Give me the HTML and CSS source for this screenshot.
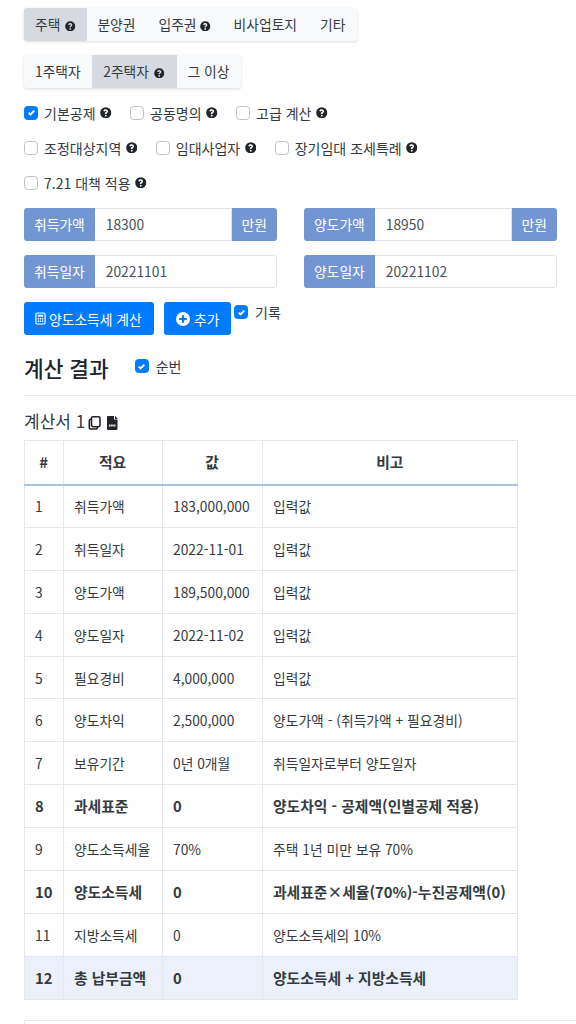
FILE: index.html
```html
<!DOCTYPE html>
<html lang="ko">
<head>
<meta charset="utf-8">
<title>양도소득세 계산</title>
<link rel="stylesheet" href="styles.css">
</head>
<body>
<svg class="defs" width="0" height="0" aria-hidden="true">
  <symbol id="q" viewBox="0 0 512 512"><path fill="currentColor" d="M256 8a248 248 0 1 0 0 496 248 248 0 0 0 0-496zm0 418a42 42 0 1 1 0-84 42 42 0 0 1 0 84zm40-134v6c0 7-5 12-12 12h-56c-7 0-12-5-12-12v-9c0-36 27-50 47-62 18-10 29-16 29-29 0-17-22-29-39-29-23 0-33 11-48 30-4 5-11 6-16 2l-35-26c-5-4-6-11-3-16 24-36 55-56 102-56 50 0 104 39 104 90 0 68-61 69-61 93z"/></symbol>
</svg>
<div class="tabs tabs-first">
  <span class="tab active narrow">주택<svg class="q"><use href="#q"/></svg></span><span class="tab tight-left">분양권</span><span class="tab tight-q">입주권<svg class="q"><use href="#q"/></svg></span><span class="tab">비사업토지</span><span class="tab">기타</span>
</div>
<div class="tabs tabs-second">
  <span class="tab first-seller">1주택자</span><span class="tab active second-active">2주택자<svg class="q"><use href="#q"/></svg></span><span class="tab last">그 이상</span>
</div>
<div class="checks">
  <label class="check"><span class="box on"><svg viewBox="0 0 8 8"><path d="M1.500 4.200 3.200 5.800 6.500 2.400"/></svg></span>기본공제<svg class="q"><use href="#q"/></svg></label>
  <label class="check"><span class="box"></span>공동명의<svg class="q"><use href="#q"/></svg></label>
  <label class="check"><span class="box"></span>고급 계산<svg class="q"><use href="#q"/></svg></label>
</div>
<div class="checks">
  <label class="check"><span class="box"></span>조정대상지역<svg class="q"><use href="#q"/></svg></label>
  <label class="check"><span class="box"></span>임대사업자<svg class="q"><use href="#q"/></svg></label>
  <label class="check"><span class="box"></span>장기임대 조세특례<svg class="q"><use href="#q"/></svg></label>
</div>
<div class="checks">
  <label class="check"><span class="box"></span>7.21 대책 적용<svg class="q"><use href="#q"/></svg></label>
</div>
<div class="grid">
  <div class="group"><span class="addon">취득가액</span><span class="field">18300</span><span class="addon">만원</span></div>
  <div class="group"><span class="addon">양도가액</span><span class="field">18950</span><span class="addon">만원</span></div>
  <div class="group"><span class="addon">취득일자</span><span class="field">20221101</span></div>
  <div class="group"><span class="addon">양도일자</span><span class="field">20221102</span></div>
</div>
<div class="actions">
  <button class="btn calc"><svg class="ic-calc" viewBox="0 0 12 14"><rect x="1" y="1" width="10" height="12" rx="1.500" fill="none" stroke="currentColor" stroke-width="1.300"/><path fill="currentColor" d="M3 3h6v2H3zM3 6.500h1.500V8H3zM5.300 6.500h1.500V8H5.300zM7.600 6.500H9V8H7.600zM3 9.300h1.500v1.500H3zM5.300 9.300h1.500v1.500H5.300zM7.600 9.300H9v1.500H7.600z"/></svg>양도소득세 계산</button>
  <button class="btn add"><svg class="ic-plus" viewBox="0 0 14 14"><circle cx="7" cy="7" r="7" fill="currentColor"/><path d="M7 3.200v7.600M3.200 7h7.600" stroke="#007bff" stroke-width="2.200"/></svg>추가</button>
  <label class="check record wide"><span class="box on"><svg viewBox="0 0 8 8"><path d="M1.500 4.200 3.200 5.800 6.500 2.400"/></svg></span>기록</label>
</div>
<div class="result-head">
  <h2>계산 결과</h2>
  <label class="check wide"><span class="box on"><svg viewBox="0 0 8 8"><path d="M1.500 4.200 3.200 5.800 6.500 2.400"/></svg></span>순번</label>
</div>
<hr class="rule">
<h3 class="sheet-title">계산서 1<svg class="ic-copy" viewBox="0 0 14 15"><path d="M5 1.700h5.500a1.500 1.500 0 0 1 1.500 1.500v7a1.500 1.500 0 0 1-1.500 1.500H5a1.500 1.500 0 0 1-1.500-1.500v-7A1.500 1.500 0 0 1 5 1.700z" fill="none" stroke="currentColor" stroke-width="1.600"/><path d="M3.500 4.200H2.800A1.500 1.500 0 0 0 1.300 5.700v6.800A1.500 1.500 0 0 0 2.800 14h5a1.500 1.500 0 0 0 1.500-1.500V12" fill="none" stroke="currentColor" stroke-width="1.600"/></svg><svg class="ic-csv" viewBox="0 0 11 14"><path fill="currentColor" d="M1 0h6v3.500h3.500V13a1 1 0 0 1-1 1H1a1 1 0 0 1-1-1V1a1 1 0 0 1 1-1zM8 0l3 3H8z"/><path d="M2 9.500h7" stroke="#fff" stroke-width="2" stroke-dasharray="1.500 .7"/></svg></h3>
<table class="sheet">
  <colgroup><col class="c1"><col class="c2"><col class="c3"><col class="c4"></colgroup>
  <thead><tr><th>#</th><th>적요</th><th>값</th><th>비고</th></tr></thead>
  <tbody>
    <tr><td>1</td><td>취득가액</td><td>183,000,000</td><td>입력값</td></tr>
    <tr><td>2</td><td>취득일자</td><td>2022-11-01</td><td>입력값</td></tr>
    <tr><td>3</td><td>양도가액</td><td>189,500,000</td><td>입력값</td></tr>
    <tr><td>4</td><td>양도일자</td><td>2022-11-02</td><td>입력값</td></tr>
    <tr><td>5</td><td>필요경비</td><td>4,000,000</td><td>입력값</td></tr>
    <tr><td>6</td><td>양도차익</td><td>2,500,000</td><td>양도가액 - (취득가액 + 필요경비)</td></tr>
    <tr><td>7</td><td>보유기간</td><td>0년 0개월</td><td>취득일자로부터 양도일자</td></tr>
    <tr class="strong"><td>8</td><td>과세표준</td><td>0</td><td>양도차익 - 공제액(인별공제 적용)</td></tr>
    <tr><td>9</td><td>양도소득세율</td><td>70%</td><td>주택 1년 미만 보유 70%</td></tr>
    <tr class="strong"><td>10</td><td>양도소득세</td><td>0</td><td>과세표준×세율(70%)-누진공제액(0)</td></tr>
    <tr><td>11</td><td>지방소득세</td><td>0</td><td>양도소득세의 10%</td></tr>
    <tr class="strong total"><td>12</td><td>총 납부금액</td><td>0</td><td>양도소득세 + 지방소득세</td></tr>
  </tbody>
</table>
<div class="next-box"></div>
</body>
</html>
```
FILE: styles.css
```css
* { box-sizing: border-box; }
html, body { height: 1024px; overflow: hidden; }
body {
  margin: 0;
  padding: 8px 0 0 24px;
  background: #fff;
  color: #343a40;
  font: 13.800px/20px "Noto Sans CJK KR", "Noto Sans", sans-serif;
}
.defs { position: absolute; }
.q { width: 10.500px; height: 10.500px; color: #212529; flex: none; margin-left: 5px; vertical-align: -1px; }
.tabs {
  display: inline-flex;
  background: #f8f9fa;
  border-radius: 3px;
  box-shadow: 0 1px 3px rgba(0,0,0,.14);
  height: 33px;
  vertical-align: top;
}
.tabs-second { display: flex; width: fit-content; margin-top: 14px; }
.tab { display: block; padding: 6px 11.500px; line-height: 21px; white-space: nowrap; color: #343a40; }
.tab.narrow { padding-left: 11px; padding-right: 11px; }
.tab.first-seller { padding-left: 11px; padding-right: 11.500px; }
.tab.tight-left { padding-left: 10.500px; }
.tab.tight-q .q { margin-left: 3.500px; }
.tab.second-active { padding-left: 11px; padding-right: 12px; }
.tab.last { padding-left: 11px; padding-right: 12px; }
.tab.active { background: #d6dae0; border-radius: 3px 0 0 3px; }
.tabs-second .tab.active { border-radius: 0; }
.checks { display: flex; gap: 18.500px; height: 35px; align-items: center; }
.tabs-second + .checks { margin-top: 7px; }
.check { display: inline-flex; align-items: center; white-space: nowrap; color: #343a40; font-size: 14px; }
.check .q { width: 11.500px; height: 11.500px; margin-left: 4.500px; }
.box {
  width: 14px; height: 14px; margin-right: 6px; flex: none;
  border: 1px solid #bcc2c8; border-radius: 3.500px; background: #fff;
  display: inline-flex; align-items: center; justify-content: center;
}
.wide .box { margin-right: 7px; }
.box.on { background: #007bff; border-color: #007bff; }
.box svg { width: 9px; height: 9px; fill: none; stroke: #fff; stroke-width: 1.700; }
.grid { display: grid; grid-template-columns: 253px 253px; column-gap: 27px; row-gap: 14px; margin-top: 8px; }
.group { display: flex; height: 33px; border-radius: 3px; overflow: hidden; }
.addon { flex: none; background: #7396d3; color: #fff; padding: 0 10px; line-height: 33px; }
.field {
  flex: 1; padding: 0 11px; line-height: 31px; color: #495057; background: #fff; min-width: 0;
  border: 1px solid #dfe3e8; border-left: 0;
}
.group > .field:last-child { border-radius: 0 3px 3px 0; }
.actions { display: flex; align-items: flex-start; margin-top: 14px; height: 33px; }
.btn {
  height: 33px; border: 0; border-radius: 3px; background: #007bff; color: #fff;
  font: inherit; display: inline-flex; align-items: center; padding: 0 0 0 11px;
}
.calc { width: 130px; }
.add { width: 67px; margin-left: 10px; padding-left: 12px; }
.ic-calc { width: 11px; height: 13px; margin-right: 3px; }
.ic-plus { width: 14px; height: 14px; margin-right: 4px; }
.record { margin: 0 0 0 3px; }
.result-head { display: flex; align-items: center; height: 34px; margin-top: 16px; }
.result-head h2 { margin: 0 26px 0 0; font-size: 21.400px; line-height: 34px; font-weight: 500; color: #212529; }
.result-head .check { position: relative; top: -2px; }
.rule { border: 0; border-top: 1px solid #e6e8ea; margin: 10px 0 0 0; }
.sheet-title { margin: 14px 0 0; height: 30px; font-size: 17px; line-height: 22px; font-weight: 400; color: #343a40; }
.ic-copy { width: 14px; height: 15px; vertical-align: -2px; color: #212529; margin-left: 3px; }
.ic-csv { width: 11px; height: 14px; vertical-align: -2px; color: #212529; margin-left: 5px; }
.sheet { border-collapse: collapse; table-layout: fixed; width: 493.500px; margin-left: -.5px; color: #343a40; }
.c1 { width: 39px; } .c2 { width: 99px; } .c3 { width: 100px; } .c4 { width: 255.500px; }
.sheet th, .sheet td { border: 1px solid #e5e8eb; padding: 0 10.500px; white-space: nowrap; height: 42.900px; }
.sheet th { text-align: center; font-weight: 700; font-size: 14.800px; height: 44px; border-bottom: 2px solid #a9c2e6; }
.sheet td { text-align: left; }
.strong td { font-weight: 700; font-size: 14.800px; }
.total td { background: #ebf0fb; }
.next-box { width: 553px; height: 60px; margin-top: 20px; border: 1px solid #e5e8eb; border-right: 0; }
```
